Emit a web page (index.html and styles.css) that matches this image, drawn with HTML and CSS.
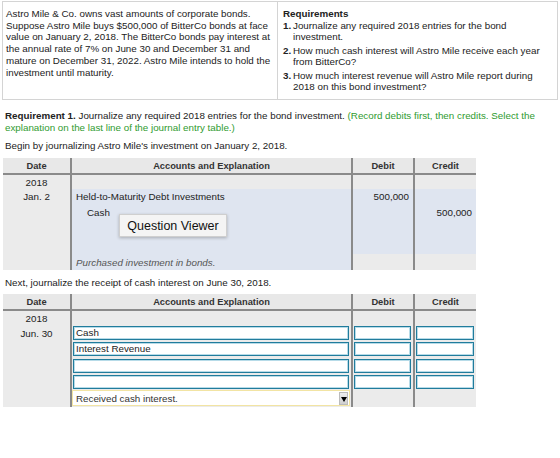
FILE: index.html
```html
<!DOCTYPE html>
<html>
<head>
<meta charset="utf-8">
<link rel="stylesheet" href="styles.css">
</head>
<body>
<div class="problem">
  <div class="problem-text">Astro Mile &amp; Co. owns vast amounts of corporate bonds. Suppose Astro Mile buys $500,000 of BitterCo bonds at face value on January 2, 2018. The BitterCo bonds pay interest at the annual rate of 7% on June 30 and December 31 and mature on December 31, 2022. Astro Mile intends to hold the investment until maturity.</div>
  <div class="reqs">
    <div class="reqs-title">Requirements</div>
    <ol class="req-list">
      <li><b>1.</b><span>Journalize any required 2018 entries for the bond investment.</span></li>
      <li><b>2.</b><span>How much cash interest will Astro Mile receive each year from BitterCo?</span></li>
      <li><b>3.</b><span>How much interest revenue will Astro Mile report during 2018 on this bond investment?</span></li>
    </ol>
  </div>
</div>

<div class="instr">
  <div><b>Requirement 1.</b> Journalize any required 2018 entries for the bond investment. <span class="green">(Record debits first, then credits. Select the</span></div>
  <div class="green">explanation on the last line of the journal entry table.)</div>
</div>

<p class="lead">Begin by journalizing Astro Mile's investment on January 2, 2018.</p>

<div class="jwrap">
  <table class="journal">
    <colgroup><col class="c-date"><col class="c-acct"><col class="c-dr"><col class="c-cr"></colgroup>
    <thead>
      <tr><th>Date</th><th>Accounts and Explanation</th><th>Debit</th><th>Credit</th></tr>
    </thead>
    <tbody>
      <tr class="r-year"><td>2018</td><td></td><td></td><td></td></tr>
      <tr class="r-line"><td class="date">Jan. 2</td><td class="blue">Held-to-Maturity Debt Investments</td><td class="blue num">500,000</td><td class="blue num"></td></tr>
      <tr class="r-line"><td></td><td class="blue indent">Cash</td><td class="blue"></td><td class="blue num">500,000</td></tr>
      <tr class="r-line"><td></td><td class="blue"></td><td class="blue"></td><td class="blue"></td></tr>
      <tr class="r-line"><td></td><td class="blue"></td><td class="blue"></td><td class="blue"></td></tr>
      <tr class="r-expl"><td></td><td class="blue expl">Purchased investment in bonds.</td><td></td><td></td></tr>
    </tbody>
  </table>
  <div class="tooltip">Question Viewer</div>
</div>

<p class="lead next">Next, journalize the receipt of cash interest on June 30, 2018.</p>

<table class="journal j2">
  <colgroup><col class="c-date"><col class="c-acct"><col class="c-dr"><col class="c-cr"></colgroup>
  <thead>
    <tr><th>Date</th><th>Accounts and Explanation</th><th>Debit</th><th>Credit</th></tr>
  </thead>
  <tbody>
    <tr class="r-year"><td>2018</td><td></td><td></td><td></td></tr>
    <tr class="r-in"><td class="date">Jun. 30</td><td><div class="field">Cash</div></td><td><div class="field"></div></td><td><div class="field"></div></td></tr>
    <tr class="r-in"><td></td><td><div class="field">Interest Revenue</div></td><td><div class="field"></div></td><td><div class="field"></div></td></tr>
    <tr class="r-in"><td></td><td><div class="field"></div></td><td><div class="field"></div></td><td><div class="field"></div></td></tr>
    <tr class="r-in"><td></td><td><div class="field"></div></td><td><div class="field"></div></td><td><div class="field"></div></td></tr>
    <tr class="r-sel"><td></td><td><div class="select"><span>Received cash interest.</span><span class="arrow"></span></div></td><td></td><td></td></tr>
  </tbody>
</table>
</body>
</html>
```

FILE: styles.css
```css
* { box-sizing: border-box; }

body {
  margin: 0;
  width: 560px;
  height: 458px;
  background: #fff;
  font-family: "Liberation Sans", Arial, sans-serif;
  font-size: 9.8px;
  color: #222;
}

/* problem statement + requirements box */
.problem {
  display: grid;
  grid-template-columns: 275px 1fr;
  margin: 1px 2px 0 2px;
  height: 99px;
  border: 1px solid #d4d4d4;
}
.problem-text {
  padding: 6px 3px 0 3px;
  line-height: 11.7px;
  border-right: 1px solid #d4d4d4;
}
.reqs {
  padding: 6px 12px 0 5px;
  line-height: 11.5px;
}
.reqs-title { font-weight: bold; }
.req-list {
  list-style: none;
  margin: 0;
  padding: 0;
}
.req-list li {
  display: flex;
  margin-bottom: 2px;
}
.req-list li b {
  width: 10px;
  flex: none;
}

/* instructions */
.instr {
  margin: 10px 0 0 5px;
  line-height: 12px;
  white-space: nowrap;
}
.green { color: #2f9b2f; }
.lead {
  margin: 6px 0 0 5px;
  line-height: 12px;
}
.next { margin-top: 7px; }

/* journal tables */
.jwrap {
  position: relative;
  margin-top: 6px;
}
.journal {
  border-collapse: collapse;
  table-layout: fixed;
  width: 473px;
  margin-left: 3px;
  background: #ebebeb;
}
.j2 { margin-top: 5px; }
.c-date { width: 68px; }
.c-acct { width: 281px; }
.c-dr { width: 62px; }
.c-cr { width: 62px; }

.journal th {
  height: 16px;
  padding: 0;
  font-weight: bold;
  font-size: 9.3px;
  color: #333;
  background: #e8e8e8;
  border-bottom: 2px solid #8a8a8a;
}
.journal td {
  padding: 0;
  vertical-align: middle;
}
.journal th + th,
.journal td + td {
  border-left: 2px solid #8a8a8a;
}
.journal th:nth-child(2) { text-align: center; }

.r-year td { height: 15px; text-align: center; }
.r-line td { height: 16.3px; }
.r-expl td { height: 16px; }

.journal td.date {
  text-align: center;
  vertical-align: top;
  padding-top: 2px;
}
.journal .r-line td { vertical-align: top; padding-top: 2px; }

.blue { background: #dfe5f0; }
.r-line td.blue { padding-left: 4px; }
.r-line td.indent { padding-left: 15px; }
.r-line td.num { text-align: right; padding-right: 4px; }
.expl {
  font-style: italic;
  color: #555;
  padding-left: 4px !important;
}

/* floating label over the first table */
.tooltip {
  position: absolute;
  left: 119px;
  top: 56px;
  width: 108px;
  height: 23px;
  background: #f4f4f4;
  border: 1px solid #cfcfcf;
  box-shadow: 0 1px 3px rgba(0, 0, 0, 0.25);
  font-size: 12.5px;
  color: #111;
  display: flex;
  align-items: center;
  justify-content: center;
}

/* answer fields */
.r-in td { height: 16.2px; }
.r-in td.date { padding-top: 3px; }
.field {
  height: 14px;
  margin: 0 2px 0 1px;
  background: #fff;
  border: 1px solid #217c9c;
  box-shadow: inset 0 0 0 1px #b7dbe8;
  padding-left: 2px;
  line-height: 12px;
  color: #222;
}
.r-sel td { height: 17px; }
.select {
  display: flex;
  align-items: center;
  justify-content: space-between;
  height: 16px;
  margin: 0 1px 0 0;
  background: #fff;
  border: 1px solid #f2e4a3;
  padding-left: 3px;
  color: #333;
}
.arrow {
  width: 9px;
  height: 13px;
  margin-right: 1px;
  background: linear-gradient(#eee, #cfcfcf);
  border: 1px solid #bbb;
  position: relative;
}
.arrow::after {
  content: "";
  position: absolute;
  left: 1px;
  top: 4px;
  border-left: 3px solid transparent;
  border-right: 3px solid transparent;
  border-top: 5px solid #000;
}
```
